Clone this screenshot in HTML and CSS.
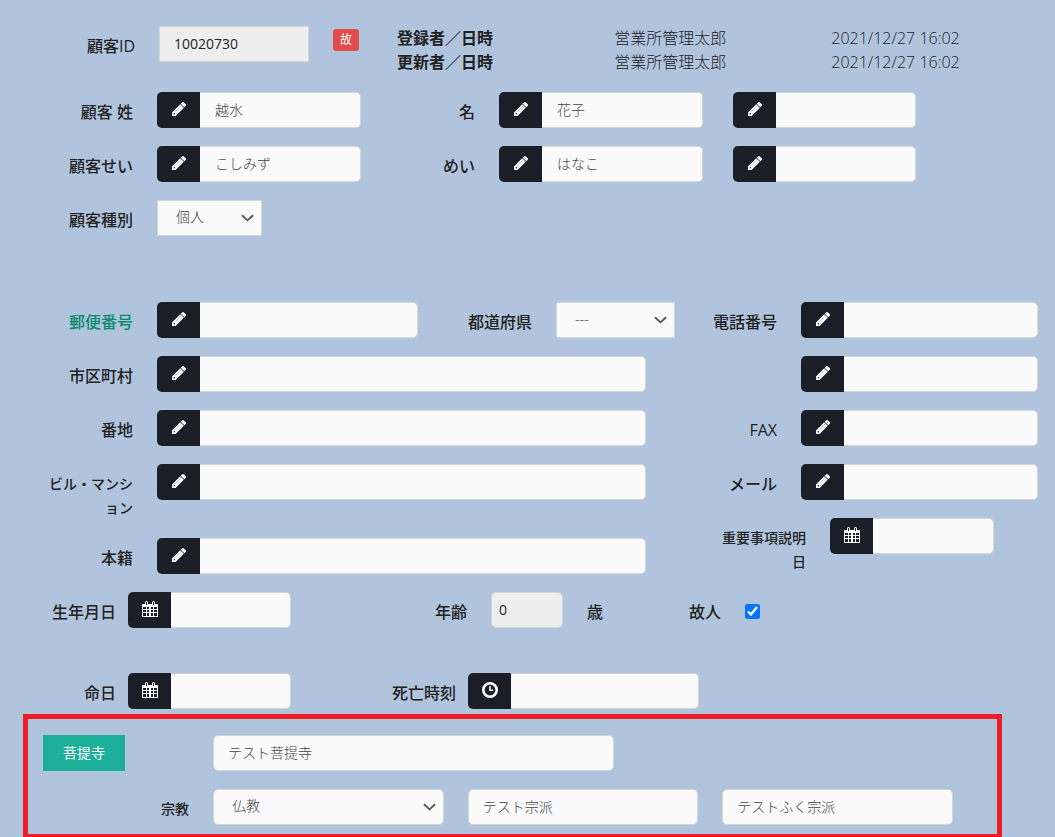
FILE: index.html
```html
<!DOCTYPE html>
<html lang="ja">
<head>
    <meta charset="UTF-8">
    <meta name="viewport" content="width=device-width, initial-scale=1.0">
    <title>顧客情報</title>
    <link rel="stylesheet" href="styles.css">
</head>
<body>
    <!-- Icons shared by the input groups -->
    <svg class="sprite" aria-hidden="true">
        <symbol id="pencil" viewBox="0 0 16 16">
            <path d="M1 15v-3.600L9.200 3.200l3.600 3.600L4.600 15zM9.700 2.700L11 1.400q1-.9 1.900 0l1.700 1.700q.9.900 0 1.900L13.300 6.300z" fill="#fff"/>
            <path d="M4.400 10.800l5.600-5.600" stroke="#8a9099" stroke-width=".6"/>
            <circle cx="3.300" cy="12.700" r=".8" fill="#1b1e26"/>
        </symbol>
        <symbol id="calendar" viewBox="0 0 16 16">
            <path d="M0 4q0-1 1-1h2V1.500Q3 0 4.500 0T6 1.500V3h4V1.500Q10 0 11.500 0T13 1.500V3h2q1 0 1 1v12H0z" fill="#fff"/>
            <path d="M4.500 1v3M11.500 1v3" stroke="#1b1e26" stroke-width="1"/>
            <path d="M1 6h3v2H1zM5 6h2v2H5zM9 6h2v2H9zM12 6h3v2h-3zM1 9h3v2H1zM5 9h2v2H5zM9 9h2v2H9zM12 9h3v2h-3zM1 12h3v3H1zM5 12h2v3H5zM9 12h2v3H9zM12 12h3v3h-3z" fill="#1b1e26"/>
        </symbol>
        <symbol id="clock" viewBox="0 0 16 16">
            <circle cx="8" cy="8" r="6.700" fill="none" stroke="#fff" stroke-width="2.600"/>
            <path d="M8 4v4.300h3" fill="none" stroke="#fff" stroke-width="1.500"/>
        </symbol>
        <symbol id="chevron" viewBox="0 0 14 8">
            <path d="M1 1l6 5.500L13 1" fill="none" stroke="#555" stroke-width="2"/>
        </symbol>
    </svg>

    <form>
        <div class="row row-id">
            <label for="customer-id">顧客ID</label>
            <input type="text" id="customer-id" class="square" value="10020730" readonly>
            <div class="badge-cell"><span class="badge">故</span></div>
            <table class="history">
                <colgroup><col class="col-label"><col class="col-name"><col></colgroup>
                <tr>
                    <th>登録者／日時</th>
                    <td>営業所管理太郎</td>
                    <td>2021/12/27 16:02</td>
                </tr>
                <tr>
                    <th>更新者／日時</th>
                    <td>営業所管理太郎</td>
                    <td>2021/12/27 16:02</td>
                </tr>
            </table>
        </div>

        <div class="row row-name">
            <label for="last-name">顧客 姓</label>
            <div class="group">
                <span class="addon"><svg><use href="#pencil"/></svg></span>
                <input type="text" id="last-name" value="越水">
            </div>
            <label for="first-name">名</label>
            <div class="group">
                <span class="addon"><svg><use href="#pencil"/></svg></span>
                <input type="text" id="first-name" value="花子">
            </div>
            <div class="group extra">
                <span class="addon"><svg><use href="#pencil"/></svg></span>
                <input type="text" aria-label="名 2">
            </div>
        </div>

        <div class="row row-name">
            <label for="last-kana">顧客せい</label>
            <div class="group">
                <span class="addon"><svg><use href="#pencil"/></svg></span>
                <input type="text" id="last-kana" value="こしみず">
            </div>
            <label for="first-kana">めい</label>
            <div class="group">
                <span class="addon"><svg><use href="#pencil"/></svg></span>
                <input type="text" id="first-kana" value="はなこ">
            </div>
            <div class="group extra">
                <span class="addon"><svg><use href="#pencil"/></svg></span>
                <input type="text" aria-label="めい 2">
            </div>
        </div>

        <div class="row row-type">
            <label for="customer-type">顧客種別</label>
            <div class="select">
                <select id="customer-type" class="square"><option>個人</option></select>
                <svg><use href="#chevron"/></svg>
            </div>
        </div>

        <div class="contact">
            <div class="address">
                <div class="row row-zip">
                    <label for="zip" class="green">郵便番号</label>
                    <div class="group">
                        <span class="addon"><svg><use href="#pencil"/></svg></span>
                        <input type="text" id="zip">
                    </div>
                    <label for="pref">都道府県</label>
                    <div class="select">
                        <select id="pref" class="square"><option>---</option></select>
                        <svg><use href="#chevron"/></svg>
                    </div>
                </div>
                <div class="row row-address">
                    <label for="city">市区町村</label>
                    <div class="group">
                        <span class="addon"><svg><use href="#pencil"/></svg></span>
                        <input type="text" id="city">
                    </div>
                </div>
                <div class="row row-address">
                    <label for="street">番地</label>
                    <div class="group">
                        <span class="addon"><svg><use href="#pencil"/></svg></span>
                        <input type="text" id="street">
                    </div>
                </div>
                <div class="row row-address">
                    <label for="building" class="small">ビル・マンション</label>
                    <div class="group">
                        <span class="addon"><svg><use href="#pencil"/></svg></span>
                        <input type="text" id="building">
                    </div>
                </div>
                <div class="row row-address">
                    <label for="domicile">本籍</label>
                    <div class="group">
                        <span class="addon"><svg><use href="#pencil"/></svg></span>
                        <input type="text" id="domicile">
                    </div>
                </div>
            </div>

            <div class="phones">
                <div class="row row-phone">
                    <label for="tel1">電話番号</label>
                    <div class="group">
                        <span class="addon"><svg><use href="#pencil"/></svg></span>
                        <input type="tel" id="tel1">
                    </div>
                </div>
                <div class="row row-phone">
                    <span></span>
                    <div class="group">
                        <span class="addon"><svg><use href="#pencil"/></svg></span>
                        <input type="tel" aria-label="電話番号 2">
                    </div>
                </div>
                <div class="row row-phone">
                    <label for="fax">FAX</label>
                    <div class="group">
                        <span class="addon"><svg><use href="#pencil"/></svg></span>
                        <input type="tel" id="fax">
                    </div>
                </div>
                <div class="row row-phone">
                    <label for="mail">メール</label>
                    <div class="group">
                        <span class="addon"><svg><use href="#pencil"/></svg></span>
                        <input type="email" id="mail">
                    </div>
                </div>
                <div class="row row-notice">
                    <label for="notice-date" class="small">重要事項説明日</label>
                    <div class="group">
                        <span class="addon"><svg><use href="#calendar"/></svg></span>
                        <input type="text" id="notice-date">
                    </div>
                </div>
            </div>
        </div>

        <div class="row row-birth">
            <label for="birthday" class="near">生年月日</label>
            <div class="group">
                <span class="addon"><svg><use href="#calendar"/></svg></span>
                <input type="text" id="birthday">
            </div>
            <label for="age">年齢</label>
            <input type="text" id="age" class="age" value="0" readonly>
            <span class="unit">歳</span>
            <label for="deceased">故人</label>
            <input type="checkbox" id="deceased" checked>
        </div>

        <div class="row row-death">
            <label for="death-date" class="near">命日</label>
            <div class="group">
                <span class="addon"><svg><use href="#calendar"/></svg></span>
                <input type="text" id="death-date">
            </div>
            <label for="death-time" class="near">死亡時刻</label>
            <div class="group">
                <span class="addon"><svg><use href="#clock"/></svg></span>
                <input type="text" id="death-time">
            </div>
        </div>

        <div class="temple">
            <div class="row row-temple">
                <div><button type="button">菩提寺</button></div>
                <input type="text" value="テスト菩提寺" aria-label="菩提寺">
            </div>
            <div class="row row-religion">
                <label for="religion" class="small">宗教</label>
                <div class="sects">
                    <div class="select">
                        <select id="religion"><option>仏教</option></select>
                        <svg><use href="#chevron"/></svg>
                    </div>
                    <input type="text" value="テスト宗派" aria-label="宗派">
                    <input type="text" value="テストふく宗派" aria-label="副宗派">
                </div>
            </div>
        </div>
    </form>
</body>
</html>
```

FILE: styles.css
```css
* {
    box-sizing: border-box;
}

body {
    margin: 0;
    background-color: #b0c4de;
    color: #222;
    font-family: "Open Sans", "Noto Sans CJK JP", sans-serif;
    font-size: 16px;
    line-height: 24px;
}

.sprite {
    display: none;
}

form {
    padding-top: 26px;
}

/* Rows: column shares are written in fr so that they follow the window */
.row {
    display: grid;
    align-items: start;
    margin-bottom: 18px;
}

.row > * {
    min-width: 0;
}

.row-id {
    grid-template-columns: 159fr 150fr 88fr 658fr;
}

.row-name {
    grid-template-columns: 157fr 204fr 138fr 204fr 213fr 139fr;
}

.row-type {
    grid-template-columns: 157fr 105fr 793fr;
    margin-bottom: 66px;
}

.row-zip {
    grid-template-columns: 157fr 261fr 138fr 119fr;
}

.row-address {
    grid-template-columns: 157fr 489fr 29fr;
}

.row-phone {
    grid-template-columns: 126fr 237fr 17fr;
}

.row-notice {
    grid-template-columns: 155fr 164fr 61fr;
}

.row-birth {
    grid-template-columns: 128fr 163fr 200fr 72fr 72fr 110fr 310fr;
    margin-bottom: 45px;
}

.row-death {
    grid-template-columns: 128fr 163fr 177fr 231fr 356fr;
    margin-bottom: 5px;
}

.row-temple {
    grid-template-columns: 185fr 401fr 383fr;
}

.row-religion {
    grid-template-columns: 185fr 740fr 44fr;
}

.contact {
    display: grid;
    grid-template-columns: 675fr 380fr;
}

/* Labels */
label,
.unit {
    padding: 8px 24px 0 36px;
    font-weight: 500;
    text-align: right;
}

label.near {
    padding-right: 12px;
}

label.small {
    font-size: 14px;
}

label.green {
    color: #0a8a6c;
}

.unit {
    padding-left: 24px;
    text-align: left;
}

/* Controls */
input,
select,
button {
    font-family: inherit;
    font-size: 14px;
    line-height: 20px;
}

input,
select {
    width: 100%;
    min-width: 0;
    height: 36px;
    margin: 0;
    padding: 6px 14px 8px;
    border: 1px solid #d5d5d5;
    border-radius: 5px;
    background-color: #fafafa;
    color: #444;
    font-weight: 300;
}

input[readonly] {
    background-color: #eee;
    color: #222;
    font-weight: 400;
}

input.square,
select.square {
    border-radius: 0;
}

input.age {
    padding-left: 7px;
}

input[type="checkbox"] {
    width: 15px;
    height: 15px;
    margin-top: 12px;
    accent-color: #0075ff;
}

.group {
    display: flex;
}

.group input {
    flex: 1;
    padding-left: 15px;
    border-left: 0;
    border-radius: 0 5px 5px 0;
}

.extra {
    padding-left: 30px;
}

.addon {
    flex: none;
    display: flex;
    justify-content: center;
    width: 43px;
    height: 36px;
    padding-top: 9px;
    border-radius: 5px 0 0 5px;
    background-color: #1b1e26;
}

.addon svg {
    width: 16px;
    height: 16px;
}

.select {
    position: relative;
}

.select select {
    appearance: none;
    padding-left: 18px;
}

.select svg {
    position: absolute;
    top: 14px;
    right: 8px;
    width: 13px;
    height: 8px;
    pointer-events: none;
}

button {
    height: 36px;
    margin-left: 15px;
    padding: 0 20px;
    border: 0;
    background-color: #1cb09a;
    color: #fff;
}

.badge-cell {
    padding: 3px 24px;
}

.badge {
    display: block;
    width: 26px;
    height: 22px;
    border-radius: 3px;
    background-color: #e24c4b;
    color: #fff;
    font-size: 12px;
    line-height: 22px;
    text-align: center;
}

.history {
    width: 100%;
    table-layout: fixed;
    border-collapse: collapse;
}

.history th,
.history td {
    padding: 0;
    font-weight: 300;
    text-align: left;
    white-space: nowrap;
}

.history th {
    font-weight: 700;
}

.col-label,
.col-name {
    width: 33%;
}

/* Highlighted block for the family temple */
.temple {
    margin: 0 53px 0 23px;
    padding-top: 16px;
    border: 5px solid #ee1c24;
    border-bottom-width: 3px;
}

.row-religion {
    margin-bottom: 9px;
}

.sects {
    display: grid;
    grid-template-columns: 1fr 1fr 1fr;
    gap: 24px;
}
```
